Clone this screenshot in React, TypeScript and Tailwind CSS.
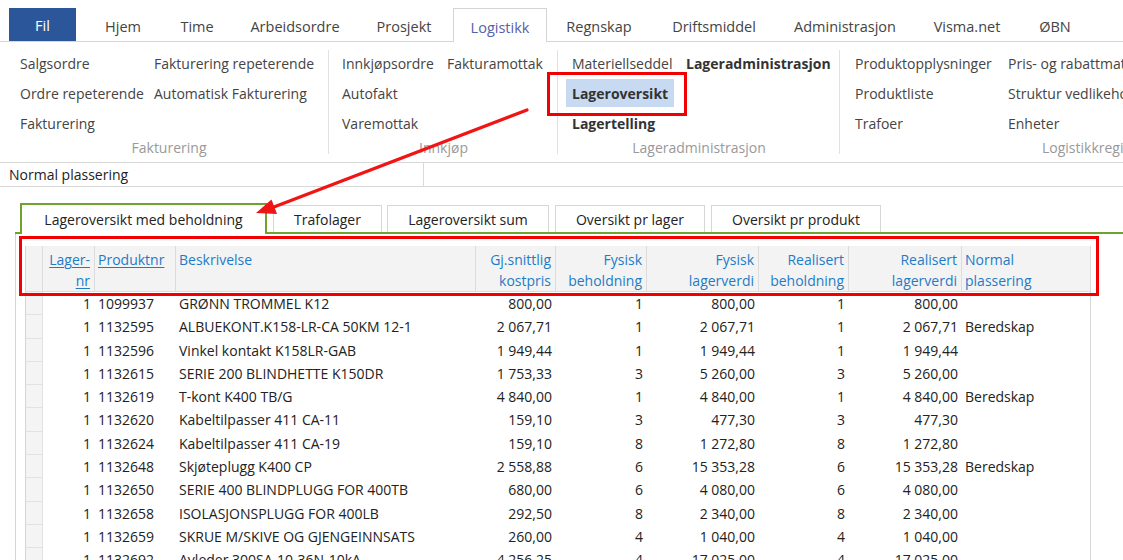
import type { ReactNode } from 'react'

const FONT = '"Open Sans", "Noto Sans", sans-serif'

const MENU_TABS: { label: string; w: number; active?: boolean }[] = [
  { label: 'Hjem', w: 94 },
  { label: 'Time', w: 54 },
  { label: 'Arbeidsordre', w: 142 },
  { label: 'Prosjekt', w: 76 },
  { label: 'Logistikk', w: 94, active: true },
  { label: 'Regnskap', w: 104 },
  { label: 'Driftsmiddel', w: 126 },
  { label: 'Administrasjon', w: 136 },
  { label: 'Visma.net', w: 108 },
  { label: 'ØBN', w: 68 },
]

const VIEW_TABS = [
  { label: 'Trafolager', w: 109, ml: 6 },
  { label: 'Lageroversikt sum', w: 162, ml: 5 },
  { label: 'Oversikt pr lager', w: 150, ml: 6 },
  { label: 'Oversikt pr produkt', w: 170, ml: 6 },
]

type Row = [string, string, string, string, string, string, string, string, string]

const ROWS: Row[] = [
  ['1', '1099937', 'GRØNN TROMMEL K12', '800,00', '1', '800,00', '1', '800,00', ''],
  ['1', '1132595', 'ALBUEKONT.K158-LR-CA 50KM 12-1', '2 067,71', '1', '2 067,71', '1', '2 067,71', 'Beredskap'],
  ['1', '1132596', 'Vinkel kontakt K158LR-GAB', '1 949,44', '1', '1 949,44', '1', '1 949,44', ''],
  ['1', '1132615', 'SERIE 200 BLINDHETTE K150DR', '1 753,33', '3', '5 260,00', '3', '5 260,00', ''],
  ['1', '1132619', 'T-kont K400 TB/G', '4 840,00', '1', '4 840,00', '1', '4 840,00', 'Beredskap'],
  ['1', '1132620', 'Kabeltilpasser 411 CA-11', '159,10', '3', '477,30', '3', '477,30', ''],
  ['1', '1132624', 'Kabeltilpasser 411 CA-19', '159,10', '8', '1 272,80', '8', '1 272,80', ''],
  ['1', '1132648', 'Skjøteplugg K400 CP', '2 558,88', '6', '15 353,28', '6', '15 353,28', 'Beredskap'],
  ['1', '1132650', 'SERIE 400 BLINDPLUGG FOR 400TB', '680,00', '6', '4 080,00', '6', '4 080,00', ''],
  ['1', '1132658', 'ISOLASJONSPLUGG FOR 400LB', '292,50', '8', '2 340,00', '8', '2 340,00', ''],
  ['1', '1132659', 'SKRUE M/SKIVE OG GJENGEINNSATS', '260,00', '4', '1 040,00', '4', '1 040,00', ''],
  ['1', '1132692', 'Avleder 300SA-10-36N-10kA', '4 256,25', '4', '17 025,00', '4', '17 025,00', ''],
]

// column alignment for the grid body, same order as ROWS entries
const ALIGN = [
  'text-right pr-[4px]',
  'text-left pl-[3px]',
  'text-left pl-[3px]',
  'text-right pr-[4px]',
  'text-right pr-[4px]',
  'text-right pr-[4px]',
  'text-right pr-[4px]',
  'text-right pr-[4px]',
  'text-left pl-[3px]',
]

const GRID_COLS = 'grid grid-cols-[17px_52px_81px_300px_80px_91px_112px_90px_113px_129px]'

function RibbonItem({ children, bold, selected }: { children: ReactNode; bold?: boolean; selected?: boolean }) {
  return (
    <div className="flex h-[30px] items-center">
      <span
        className={`relative flex h-[28px] items-center whitespace-nowrap px-[6px] ${bold ? 'font-bold text-[#333]' : 'text-[#444]'} ${selected ? 'bg-[#c7daf2]' : ''}`}
      >
        {children}
        {selected && <span className="absolute -top-[7px] -bottom-[9px] -left-[19px] -right-[13px] border-[3px] border-[#f00000]" />}
      </span>
    </div>
  )
}

function RibbonGroup({
  width,
  pl,
  col2,
  left,
  right,
  label,
  labelPl,
  last,
}: {
  width: number
  pl: number
  col2: number
  left: ReactNode[]
  right: ReactNode[]
  label: string
  labelPl?: number
  last?: boolean
}) {
  return (
    <div className="relative flex shrink-0 flex-col" style={{ width }}>
      <div className="flex pt-[6px]" style={{ paddingLeft: pl }}>
        <div className="flex flex-col" style={{ width: col2 }}>
          {left}
        </div>
        <div className="flex flex-col">{right}</div>
      </div>
      <div
        className={`h-[20px] whitespace-nowrap text-[#999] leading-[20px] ${labelPl != null ? 'text-left' : 'text-center'}`}
        style={labelPl != null ? { paddingLeft: labelPl } : undefined}
      >
        {label}
      </div>
      {!last && <div className="absolute right-0 top-[8px] h-[104px] w-px bg-[#e1e1e1]" />}
    </div>
  )
}

function HeaderCell({ lines, align, underline }: { lines: string[]; align: string; underline?: boolean }) {
  return (
    <div className={`border-r border-[#dcdcdc] pt-[3px] leading-[21px] text-[#1f7bc6] ${align}`}>
      {lines.map((l) => (
        <div key={l} className={underline ? 'underline underline-offset-2' : ''}>
          {l}
        </div>
      ))}
    </div>
  )
}

export default function App() {
  return (
    <div className="relative h-[560px] w-[1123px] overflow-hidden bg-white text-[14px]" style={{ fontFamily: FONT }}>
      {/* menu tabs */}
      <div className="flex h-[42px] items-end border-b border-[#d5d5d5] pl-[9px] text-[14.5px]">
        <div className="flex h-[33px] w-[67px] items-center justify-center bg-[#2b579a] pt-[3px] text-white">Fil</div>
        {MENU_TABS.map((t) =>
          t.active ? (
            <div
              key={t.label}
              className="-mb-px ml-[11px] flex h-[34px] items-center justify-center border border-b-0 border-[#d5d5d5] bg-white pt-[4px] text-[#5560ad]"
              style={{ width: t.w }}
            >
              {t.label}
            </div>
          ) : (
            <div key={t.label} className="flex h-[33px] items-center justify-center pt-[4px] text-[#444]" style={{ width: t.w }}>
              {t.label}
            </div>
          ),
        )}
      </div>

      {/* ribbon */}
      <div className="flex h-[121px] border-b border-[#d9d9d9] pl-[9px] text-[14px]">
        <RibbonGroup
          width={320}
          pl={5}
          col2={134}
          left={[
            <RibbonItem key="a">Salgsordre</RibbonItem>,
            <RibbonItem key="b">Ordre repeterende</RibbonItem>,
            <RibbonItem key="c">Fakturering</RibbonItem>,
          ]}
          right={[<RibbonItem key="a">Fakturering repeterende</RibbonItem>, <RibbonItem key="b">Automatisk Fakturering</RibbonItem>]}
          label="Fakturering"
        />
        <RibbonGroup
          width={229}
          pl={7}
          col2={105}
          left={[
            <RibbonItem key="a">Innkjøpsordre</RibbonItem>,
            <RibbonItem key="b">Autofakt</RibbonItem>,
            <RibbonItem key="c">Varemottak</RibbonItem>,
          ]}
          right={[<RibbonItem key="a">Fakturamottak</RibbonItem>]}
          label="Innkjøp"
        />
        <RibbonGroup
          width={282}
          pl={8}
          col2={114}
          left={[
            <RibbonItem key="a">Materiellseddel</RibbonItem>,
            <RibbonItem key="b" bold selected>
              Lageroversikt
            </RibbonItem>,
            <RibbonItem key="c" bold>
              Lagertelling
            </RibbonItem>,
          ]}
          right={[
            <RibbonItem key="a" bold>
              Lageradministrasjon
            </RibbonItem>,
          ]}
          label="Lageradministrasjon"
        />
        <RibbonGroup
          width={360}
          pl={9}
          col2={153}
          left={[
            <RibbonItem key="a">Produktopplysninger</RibbonItem>,
            <RibbonItem key="b">Produktliste</RibbonItem>,
            <RibbonItem key="c">Trafoer</RibbonItem>,
          ]}
          right={[
            <RibbonItem key="a">Pris- og rabattmatrise</RibbonItem>,
            <RibbonItem key="b">Struktur vedlikehold</RibbonItem>,
            <RibbonItem key="c">Enheter</RibbonItem>,
          ]}
          label="Logistikkregister"
          labelPl={202}
          last
        />
      </div>

      {/* column chooser strip */}
      <div className="flex h-[24px] border-b border-[#d9d9d9] text-[14px] text-[#222]">
        <div className="flex w-[424px] items-center border-r border-[#d9d9d9] pl-[9px]">Normal plassering</div>
        <div className="flex-1" />
      </div>

      {/* view tabs */}
      <div className="ml-[15px] mt-[18px] flex h-[29px] items-end border-b-2 border-[#6ea42e] text-[14px] text-[#222]">
        <div className="w-[5px]" />
        <div className="-mb-[2px] flex h-[31px] w-[247px] items-center justify-center border-2 border-b-0 border-[#6ea42e] bg-white">
          Lageroversikt med beholdning
        </div>
        {VIEW_TABS.map((t) => (
          <div
            key={t.label}
            className="flex h-[27px] items-center justify-center border border-b-0 border-[#d6d6d6] bg-white"
            style={{ width: t.w, marginLeft: t.ml }}
          >
            {t.label}
          </div>
        ))}
      </div>

      {/* grid */}
      <div className="ml-[15px] flex h-[400px] border-l border-[#d4d4d4] pl-[9px] pt-[12px]">
        <div className="relative w-[1066px] border-x border-[#d6d6d6] text-[14px]">
          <div className={`${GRID_COLS} h-[46px] border-b border-[#dcdcdc] bg-[#f3f3f3]`}>
            <div className="border-r border-[#dcdcdc]" />
            <HeaderCell lines={['Lager-', 'nr']} align="text-right pr-[4px]" underline />
            <HeaderCell lines={['Produktnr']} align="text-left pl-[3px]" underline />
            <HeaderCell lines={['Beskrivelse']} align="text-left pl-[3px]" />
            <HeaderCell lines={['Gj.snittlig', 'kostpris']} align="text-right pr-[4px]" />
            <HeaderCell lines={['Fysisk', 'beholdning']} align="text-right pr-[4px]" />
            <HeaderCell lines={['Fysisk', 'lagerverdi']} align="text-right pr-[4px]" />
            <HeaderCell lines={['Realisert', 'beholdning']} align="text-right pr-[4px]" />
            <HeaderCell lines={['Realisert', 'lagerverdi']} align="text-right pr-[4px]" />
            <HeaderCell lines={['Normal', 'plassering']} align="text-left pl-[3px]" />
          </div>
          <div className="absolute -left-[7px] -top-[10px] h-[60px] w-[1080px] border-[3px] border-[#f00000]" />
          {ROWS.map((r) => (
            <div key={r[1]} className={`${GRID_COLS} h-[23.3px] leading-[23px] text-[#222]`}>
              <div className="border-b border-r border-[#e2e2e2] bg-[#f4f4f4]" />
              {r.map((v, i) => (
                <div key={i} className={`whitespace-nowrap ${ALIGN[i]}`}>
                  {v}
                </div>
              ))}
            </div>
          ))}
        </div>
      </div>

      {/* pointer arrow */}
      <svg className="pointer-events-none absolute left-0 top-0" width="1123" height="560">
        <line x1="527" y1="110" x2="270" y2="208.5" stroke="#f01414" strokeWidth="3.2" strokeLinecap="round" />
        <polygon points="256,213 271.5,199.5 277,214" fill="#f01414" />
      </svg>
    </div>
  )
}
